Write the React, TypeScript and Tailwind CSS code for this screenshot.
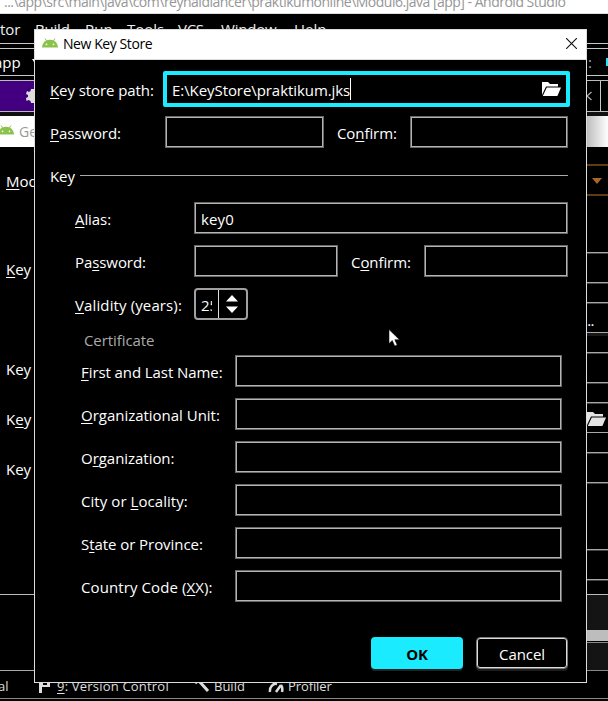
import type { ReactNode } from "react";

function Label({ children, className = "" }: { children: ReactNode; className?: string }) {
  return <span className={`shrink-0 whitespace-pre leading-5 ${className}`}>{children}</span>;
}

// Mnemonic letter of a label
function M({ children }: { children: ReactNode }) {
  return <span className="underline decoration-1 underline-offset-2 [text-decoration-skip-ink:none]">{children}</span>;
}

function Field({ className = "", children }: { className?: string; children?: ReactNode }) {
  return (
    <div className={`flex h-8 shrink-0 items-center border border-[#686868] bg-black ${className}`}>
      <div className="flex h-full w-full items-center border border-[#b4b4b4]">{children}</div>
    </div>
  );
}

function Folder({ className = "" }: { className?: string }) {
  return (
    <svg viewBox="0 0 19 14" className={`h-[14px] w-[19px] shrink-0 ${className}`} fill="currentColor">
      <path d="M0 0h6l2 2h8v2.5H4L0 13z" />
      <path d="M4.8 5.5H19L15.4 14H.8z" />
    </svg>
  );
}

function Android({ className = "" }: { className?: string }) {
  return (
    <svg viewBox="0 0 16 10" className={`h-[10px] w-4 shrink-0 ${className}`}>
      <path d="M3 .5 4.7 3M13 .5 11.3 3" stroke="#8bc34a" strokeWidth="1" />
      <path d="M0 9.5C.3 4.8 3.5 1.8 8 1.8s7.700 3 8 7.700z" fill="#8bc34a" />
      <circle cx="4.500" cy="6.400" r=".8" fill="#fff" />
      <circle cx="11.500" cy="6.400" r=".8" fill="#fff" />
    </svg>
  );
}

function Bar({ h }: { h: string }) {
  return <div className={`shrink-0 border-b border-[#a8a8a8] shadow-[0_1px_0_#444] ${h}`} />;
}

function Background() {
  return (
    <div className="flex h-full w-full flex-col">
      <div className="flex h-[14px] shrink-0 overflow-hidden border-b border-[#ddd] bg-white pl-[4px] text-[14px] text-[#969696]">
        <span className="-mt-[8px] whitespace-pre leading-5 tracking-[-0.5px]">...\app\src\main\java\com\reynaldlancer\praktikumonline\Modul6.java [app] - Android Studio</span>
      </div>
      <div className="flex h-[30px] shrink-0 items-center border-b border-[#c8c8c8] text-[15px] text-[#eee]">
        <span className="w-[35px] pt-[2px]">tor</span>
        <span className="w-[50px] pt-[2px] tracking-[-0.2px]">Build</span>
        <span className="w-[42px] pt-[2px]">Run</span>
        <span className="w-[51px] pt-[2px]">Tools</span>
        <span className="w-[43px] pt-[2px] tracking-[-0.3px]">VCS</span>
        <span className="w-[73px] pt-[2px] tracking-[-0.2px]">Window</span>
        <span className="pt-[2px]">Help</span>
      </div>
      <div className="mt-1 flex h-7 shrink-0 items-center justify-between border-y border-[#c8c8c8] text-[15px]">
        <span className="flex items-center gap-[11px]"><span className="-ml-[6px] pt-px">app</span><i className="border-x-4 border-t-[6px] border-x-transparent border-t-white" /></span>
        <span className="flex items-center gap-[14px] text-[#aaa]"><span>:</span><i className="h-2 w-[2px] bg-[#1aebff]" /></span>
      </div>
      <div className="mt-1 flex h-8 shrink-0 items-center justify-between border-y border-[#bcbcbc]">
        <div className="flex h-full w-[34px] items-center bg-[#420080]">
          <i className="ml-3 h-6 w-px bg-[#aaa]" />
          <svg viewBox="0 0 14 14" className="ml-[14px] h-[14px] w-[14px] shrink-0" fill="#ddd">
            <path d="M5 0h4l.5 2 2 1 2-1L14 5l-2 1v2l2 1-1 3-2-1-2 1-.5 2H5l-.5-2-2-1-2 1L0 9l2-1V6L0 5l1-3 2 1 1.500-1z" />
          </svg>
        </div>
        <div className="flex h-full w-[22px] items-center">
          <svg viewBox="0 0 8 10" className="h-[10px] w-2" fill="none" stroke="#aaa" strokeWidth="1.300"><path d="M5.500 1 1 5l4.500 4" /></svg>
          <i className="ml-[6px] h-full w-px bg-[#c8c8c8]" />
        </div>
      </div>
      <div className="h-[4px] shrink-0 bg-[#111]" />
      <div className="flex h-[31px] shrink-0 items-center bg-white text-[14px] text-[#999]">
        <Android className="-ml-[2px] -mt-[3px]" /><span className="-mt-px ml-[5px]">Ge</span>
        <div className="ml-auto h-full w-[22px] bg-gradient-to-r from-[#bbb] to-white" />
      </div>
      <div className="flex h-[552px] shrink-0 justify-between border-b border-[#888] text-[15px]">
        <div className="flex w-[34px] flex-col overflow-hidden">
          <div className="flex h-[448px] shrink-0 flex-col border-b border-[#bbb] pl-[6px] pt-[24px]">
            <Label className="h-[88px]"><M>M</M>od</Label>
            <Label className="h-[100px]"><M>K</M>ey</Label>
            <Label className="h-[50px]">Key</Label>
            <Label className="h-[50px]">K<M>e</M>y</Label>
            <Label>Key</Label>
          </div>
          <div className="h-[76px] shrink-0 border-b border-[#aaa]" />
        </div>
        <div className="flex w-[21px] flex-col overflow-hidden">
          <div className="mt-[17px] flex h-[32px] shrink-0 items-center border-y-2 border-[#603b12] pl-[5px]">
            <i className="mt-[2px] border-x-[5px] border-t-[6px] border-x-transparent border-t-[#a8682a]" />
          </div>
          <Bar h="h-[57px]" /><Bar h="h-[30px]" /><Bar h="h-[20px]" />
          <div className="flex h-[30px] shrink-0 items-end border-b border-[#a8a8a8] text-[15px] leading-4"><span className="-ml-[3px] mb-1 tracking-[-0.7px]">...</span></div>
          <div className="h-[3px] shrink-0 bg-[#181818]" />
          <Bar h="h-[17px]" /><Bar h="h-[30px]" /><Bar h="h-[20px]" />
          <div className="flex h-[30px] shrink-0 items-center border-b border-[#a8a8a8] text-[#e4e4e4]"><Folder className="mt-[2px]" /></div>
          <Bar h="h-[20px]" /><Bar h="h-[30px]" /><Bar h="h-[67px]" /><Bar h="h-[30px]" />
          <div className="mt-1 h-[11px] shrink-0 border-b border-[#bbb]" />
          <div className="h-[35px] shrink-0 bg-[#141414]" />
          <div className="h-[11px] shrink-0 bg-[#bdbdbd]" />
          <div className="mt-px h-[29px] shrink-0 border-y border-[#888] bg-[#141414]" />
        </div>
      </div>
      <div className="-mt-[23px] flex h-[22px] shrink-0 items-center text-[13px] text-[#ddd]">
        <span className="-ml-[2px] w-[41px]">al</span>
        <svg viewBox="0 0 12 16" className="mr-[6px] h-4 w-3" fill="#ddd"><path d="M0 0h3v14H0zM3 1h8v7H3z" /><path fill="#000" d="M4 3h4v3H4z" /></svg>
        <span className="w-[137px] tracking-[.2px]"><M>9</M>: Version Control</span>
        <svg viewBox="0 0 16 16" className="mr-1 h-4 w-4" fill="none" stroke="#ddd" strokeWidth="3"><path d="m1 4 5-4M5 2l9 10" /></svg>
        <span className="w-[54px]">Build</span>
        <svg viewBox="0 0 16 16" className="mr-1 h-4 w-4" fill="none" stroke="#ddd" strokeWidth="2.500"><path d="M2 13a6 7 0 0 1 7-8M8 13l5-7M13 6q2 3 1 7" /></svg>
        <span className="tracking-[-0.1px]">Profiler</span>
      </div>
    </div>
  );
}

const certificate: ReactNode[] = [
  <span className="tracking-[-0.08px]"><M>F</M>irst and Last Name:</span>,
  <span className="tracking-[-0.02px]"><M>O</M>rganizational Unit:</span>,
  <span className="tracking-[-0.04px]">O<M>r</M>ganization:</span>,
  <span className="tracking-[0.06px]">City or <M>L</M>ocality:</span>,
  <span className="tracking-[-0.06px]">S<M>t</M>ate or Province:</span>,
  <span className="tracking-[0.1px]">Country Code (<M>X</M>X):</span>,
];

function Dialog() {
  return (
    <div className="absolute left-[34px] top-[29px] flex h-[654px] w-[553px] flex-col border border-[#ddd] bg-black">
      <div className="flex h-[30px] shrink-0 items-center border-b border-[#ddd] bg-white pl-[7px] pr-[9px] text-[14px] text-black">
        <Android className="-mt-[3px]" />
        <span className="-mt-[2px] ml-[5px] tracking-[-0.42px]">New Key Store</span>
        <svg viewBox="0 0 10 10" className="-mt-[3px] ml-auto h-[11px] w-[11px]" stroke="#111" strokeWidth="1"><path d="m0 0 10 10M10 0 0 10" /></svg>
      </div>
      <div className="flex flex-col pl-[15px] pr-[18px] pt-[11px] text-[15px] tracking-[-0.08px]">
        <div className="-mr-[2px] flex h-9 items-center">
          <Label className="w-[113px] pt-[2px]"><M>K</M>ey store path:</Label>
          <div className="flex h-9 flex-1 items-center rounded-[2px] border-4 border-[#1aebff] pl-[5px] pr-[5px]">
            <span className="pt-[2px] tracking-[-0.07px]">E:\KeyStore\praktikum.jks</span>
            <i className="h-[22px] w-px bg-white" />
            <Folder className="ml-auto" />
          </div>
        </div>
        <div className="mt-[9px] flex h-8 items-center">
          <Label className="w-[115px] pt-[2px]"><M>P</M>assword:</Label>
          <Field className="w-[159px]" />
          <Label className="ml-[13px] w-[73px] pt-[2px]">Co<M>n</M>firm:</Label>
          <Field className="flex-1" />
        </div>
        <div className="mt-[17px] flex h-5 items-center">
          <Label className="w-[30px] pt-[1px]">Key</Label>
          <i className="h-px flex-1 bg-[#aaa]" />
        </div>
        <div className="ml-[25px] mt-[17px] flex h-8 items-center">
          <Label className="w-[119px] pt-[2px]"><M>A</M>lias:</Label>
          <Field className="flex-1"><span className="pl-[5px] pt-[2px] tracking-[0.15px]">key0</span></Field>
        </div>
        <div className="ml-[25px] mt-[11px] flex h-8 items-center">
          <Label className="w-[119px] pt-[2px]">Pa<M>s</M>sword:</Label>
          <Field className="w-[144px]" />
          <Label className="ml-[13px] w-[73px] pt-[2px]">C<M>o</M>nfirm:</Label>
          <Field className="flex-1" />
        </div>
        <div className="ml-[25px] mt-[11px] flex h-8 items-center">
          <Label className="w-[119px] pt-[2px] tracking-[0.12px]"><M>V</M>alidity (years):</Label>
          <div className="flex h-8 w-[54px] items-center rounded-[4px] border-2 border-[#a0a0a0]">
            <span className="ml-[5px] w-[11px] overflow-hidden pt-[2px]">25</span>
            <i className="ml-[6px] h-full w-px bg-[#ddd]" />
            <svg viewBox="0 0 12 18" className="ml-[7px] h-[18px] w-3" fill="#fff"><path d="M6 0 12 6.500H0zM0 11.500h12L6 18z" /></svg>
          </div>
        </div>
        <Label className="ml-[34px] mt-[10px] h-[25px] text-[#aaa]">Certificate</Label>
        <div className="ml-[31px] mr-[6px] flex flex-col gap-[11px]">
          {certificate.map((label, i) => (
            <div key={i} className="flex h-8 items-center">
              <Label className="w-[154px] pt-[2px]">{label}</Label>
              <Field className="flex-1" />
            </div>
          ))}
        </div>
        <div className="mt-[35px] flex h-8 justify-end gap-[13px]">
          <button className="h-8 w-[92px] rounded-[4px] bg-[#1aebff] pt-[2px] font-bold text-black shadow-[0_2px_0_#222]">OK</button>
          <button className="h-8 w-[92px] rounded-[4px] border border-[#777] bg-black shadow-[0_2px_0_#1c1c1c]">
            <span className="flex h-full items-center justify-center rounded-[3px] border border-[#ddd] pt-[2px]">Cancel</span>
          </button>
        </div>
      </div>
    </div>
  );
}

export default function App() {
  return (
    <div className="relative h-[701px] w-[608px] overflow-hidden bg-black font-['Open_Sans','Noto_Sans',sans-serif] text-white">
      <Background />
      <Dialog />
      <svg viewBox="0 0 12 18" className="absolute left-[388px] top-[328px] h-[19px] w-3">
        <path d="M1 1v14l3.300-3 2.400 5.500 2.500-1-2.400-5.300H11.500z" fill="#fff" stroke="#000" strokeWidth=".5" />
      </svg>
    </div>
  );
}
